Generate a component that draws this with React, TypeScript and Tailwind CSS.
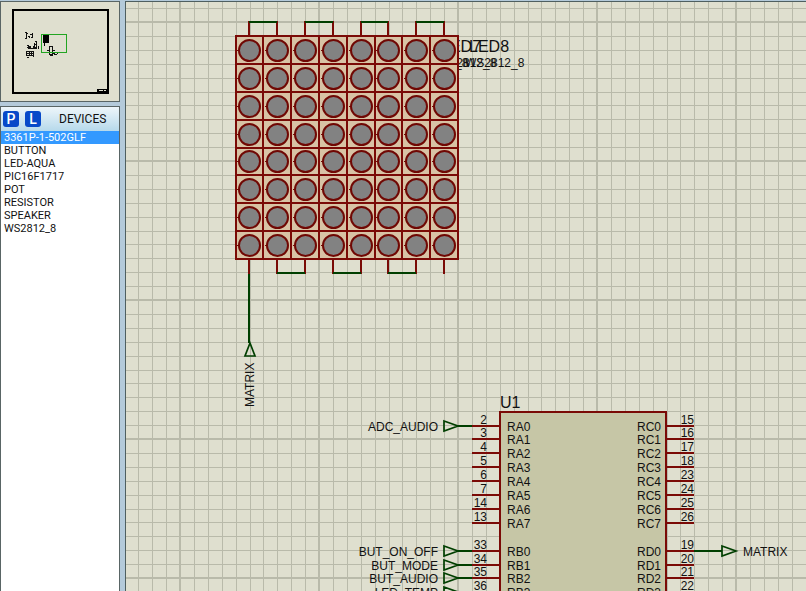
import React from "react";

const devices = [
  "3361P-1-502GLF",
  "BUTTON",
  "LED-AQUA",
  "PIC16F1717",
  "POT",
  "RESISTOR",
  "SPEAKER",
  "WS2812_8",
];

const WIRE = "#003f00";
const PIN = "#7a0a06";
const PITCH = 13.9;

const gridLines = Array.from({ length: 140 }, (_, i) => i - 4);
const colCentres = [249, 277, 305, 333, 361, 388, 416, 444];
const rowCentres = [50, 78, 106, 134, 161, 189, 217, 245];
const colEdges = [236, 263, 291, 319, 347, 375, 402, 430, 458];
const rowEdges = [36, 64, 92, 120, 148, 175, 203, 231, 259];

type Pin = { y: number; left: string; leftNum: string; right: string; rightNum: string; label?: string };

const pins: Pin[] = [
  { y: 426, left: "RA0", leftNum: "2", right: "RC0", rightNum: "15", label: "ADC_AUDIO" },
  { y: 439, left: "RA1", leftNum: "3", right: "RC1", rightNum: "16" },
  { y: 453, left: "RA2", leftNum: "4", right: "RC2", rightNum: "17" },
  { y: 467, left: "RA3", leftNum: "5", right: "RC3", rightNum: "18" },
  { y: 481, left: "RA4", leftNum: "6", right: "RC4", rightNum: "23" },
  { y: 495, left: "RA5", leftNum: "7", right: "RC5", rightNum: "24" },
  { y: 509, left: "RA6", leftNum: "14", right: "RC6", rightNum: "25" },
  { y: 523, left: "RA7", leftNum: "13", right: "RC7", rightNum: "26" },
  { y: 551, left: "RB0", leftNum: "33", right: "RD0", rightNum: "19", label: "BUT_ON_OFF" },
  { y: 565, left: "RB1", leftNum: "34", right: "RD1", rightNum: "20", label: "BUT_MODE" },
  { y: 578, left: "RB2", leftNum: "35", right: "RD2", rightNum: "21", label: "BUT_AUDIO" },
  { y: 592, left: "RB3", leftNum: "36", right: "RD3", rightNum: "22", label: "LED_TEMP" },
];

function Grid() {
  return (
    <g fill="#b9baaa" shapeRendering="crispEdges">
      {gridLines.map((i) => {
        const major = i % 10 === 0;
        const x = Math.round(180 + i * PITCH);
        const y = Math.round(22 + i * PITCH);
        return (
          <React.Fragment key={i}>
            <rect x={major ? x - 1 : x} y="0" width={major ? 2 : 1} height="1400" />
            <rect x="120" y={major ? y - 1 : y} width="1900" height={major ? 2 : 1} />
          </React.Fragment>
        );
      })}
    </g>
  );
}

function LedMatrix() {
  return (
    <g>
      <g fill="#111" fontSize="16">
        <text x="441" y="52">LED7</text>
        <text x="469" y="52">LED8</text>
      </g>
      <g fill="#111" fontSize="12">
        <text x="409" y="67">WS2812_8</text>
        <text x="437" y="67">WS2812_8</text>
        <text x="465" y="67">WS2812_8</text>
      </g>
      <rect x="236" y="36" width="222" height="223" fill="#d8c3a5" />
      <g stroke={PIN} strokeWidth="2" shapeRendering="crispEdges">
        {colEdges.map((x) => <path key={x} d={`M${x} 35V260`} />)}
        {rowEdges.map((y) => <path key={y} d={`M235 ${y}H459`} />)}
      </g>
      <g fill="#828282" stroke="#700804" strokeWidth="2">
        {rowCentres.map((y) => colCentres.map((x) => (
          <g key={`${x}-${y}`}>
            <path d={`M${x - 12} ${y + 0.5}h3`} strokeWidth="1" />
            <circle cx={x + 0.5} cy={y + 0.5} r="10.5" />
          </g>
        )))}
      </g>
      <g fill="none" strokeWidth="2" shapeRendering="crispEdges">
        {[0, 2, 4, 6].map((i) => (
          <g key={i}>
            <path stroke={PIN} d={`M${colCentres[i]} 36V21M${colCentres[i + 1]} 36V21`} />
            <path stroke={WIRE} d={`M${colCentres[i]} 22H${colCentres[i + 1]}`} />
          </g>
        ))}
        {[1, 3, 5].map((i) => (
          <g key={i}>
            <path stroke={PIN} d={`M${colCentres[i]} 259V274M${colCentres[i + 1]} 259V274`} />
            <path stroke={WIRE} d={`M${colCentres[i]} 273H${colCentres[i + 1]}`} />
          </g>
        ))}
        <path stroke={PIN} d="M249 259V274M444 259V274" />
        <path stroke={WIRE} d="M249 274V343" />
      </g>
      <path d="M250 343L255 356H245Z" fill="none" stroke={WIRE} strokeWidth="1.7" />
      <text transform="translate(254 407) rotate(-90)" fontSize="12" fill="#111">MATRIX</text>
    </g>
  );
}

function Chip() {
  return (
    <g fontSize="12" fill="#111">
      <text x="500" y="408" fontSize="16">U1</text>
      <rect x="500" y="412" width="166" height="560" fill="#c6c6a6" stroke={PIN} strokeWidth="2" shapeRendering="crispEdges" />
      {pins.map((p) => (
        <g key={p.y}>
          <path d={`M472 ${p.y}H500M666 ${p.y}H694`} stroke={PIN} strokeWidth="2" shapeRendering="crispEdges" />
          <text x="487" y={p.y - 2} textAnchor="end">{p.leftNum}</text>
          <text x="507" y={p.y + 5}>{p.left}</text>
          <text x="694" y={p.y - 2} textAnchor="end">{p.rightNum}</text>
          <text x="661" y={p.y + 5} textAnchor="end">{p.right}</text>
          {p.label && (
            <g>
              <text x="438" y={p.y + 5} textAnchor="end">{p.label}</text>
              <path d={`M444 ${p.y - 5}L458 ${p.y}L444 ${p.y + 5}Z`} fill="none" stroke={WIRE} strokeWidth="1.7" />
              <path d={`M458 ${p.y}H472`} stroke={WIRE} strokeWidth="2" shapeRendering="crispEdges" />
            </g>
          )}
        </g>
      ))}
      <path d="M694 551H722" stroke={WIRE} strokeWidth="2" shapeRendering="crispEdges" />
      <path d="M722 546L736 551L722 556Z" fill="none" stroke={WIRE} strokeWidth="1.7" />
      <text x="743" y="556">MATRIX</text>
    </g>
  );
}

function Overview() {
  return (
    <svg width="118" height="99" viewBox="1 2 118 99" shapeRendering="crispEdges" role="img" aria-label="Sheet overview">
      <rect x="13" y="10" width="95" height="83" fill="none" stroke="#000" strokeWidth="2" />
      <path d="M97 89h10v3h-10z" fill="#000" />
      <path d="M99 90h4v1h-4zM104 90h2v1h-2z" fill="#dfdfcf" />
      <path
        fill="none"
        stroke="#111"
        strokeWidth="1"
        d="M25 32.5h2M26 33.5h2M26.5 34v5M28 36.5h2M25 38.5h2M30 34.5h3M32.5 35v3M32 33.5h1M31 37.5h2M29.5 36v2M27 45.5h2M28 46.5h3M27 47.5h4M28 48.5h9M33 47.5h4M33 46.5h2M34.5 43v4M35 41.5h2M36.5 42v6M35 44.5h2M38.5 46v3M26 51.5h8M26 53.5h3M30 53.5h4M26 55.5h7M27 57.5h2M26.5 51v5M29.5 51v5M31.5 51v4M33.5 51v6"
      />
      <path d="M43 35h6v8h-6zM44 43h1v3h-1z" fill="#000" />
      <path d="M49.5 46v8h3v-8zM47 50.5h3M53 50.5h2M52 53.5h3M54 54.5h3M57 53.5h1M50 55.5h3" fill="none" stroke="#111" />
      <rect x="41.5" y="34.5" width="25" height="18" fill="none" stroke="#22a522" />
    </svg>
  );
}

const toolButton =
  "flex h-4 w-4 items-center justify-center rounded-[3px] bg-[#0749c9] text-sm font-medium leading-4 text-white";

function Sidebar() {
  return (
    <aside className="flex w-[120px] shrink-0 flex-col gap-1 pt-px font-[Roboto,sans-serif] text-[11px] text-[#111]">
      <div className="border border-[#596565] bg-[#dfdfcf]">
        <Overview />
      </div>
      <section className="flex min-h-0 flex-1 flex-col border-x border-t border-[#596565] bg-white">
        <header className="flex h-6 shrink-0 items-center gap-1.5 bg-linear-to-b from-[#eef6fa] to-[#b6d9eb] pl-0.5">
          <button type="button" aria-label="Pick devices" className={toolButton}>P</button>
          <button type="button" aria-label="Manage libraries" className={toolButton}>L</button>
          <h2 className="flex-1 pl-3 text-xs">DEVICES</h2>
        </header>
        <ul className="flex flex-col">
          {devices.map((name, i) => (
            <li key={name}>
              <button
                type="button"
                aria-pressed={i === 0}
                className="block w-full px-[3px] text-left leading-[13px] whitespace-nowrap aria-pressed:bg-[#3399ff] aria-pressed:text-white"
              >
                {name}
              </button>
            </li>
          ))}
        </ul>
      </section>
    </aside>
  );
}

export default function App() {
  return (
    <div className="flex h-screen gap-[5px] overflow-hidden bg-[#b4cada]">
      <Sidebar />
      <main className="mt-px min-w-0 flex-1 overflow-hidden border-t border-l border-[#4f5f60] bg-[#dfdfcf]">
        <svg
          width="1800"
          height="1200"
          viewBox="126 2 1800 1200"
          className="block max-w-none font-['Liberation_Sans',Arial,sans-serif]"
          role="img"
          aria-label="Schematic sheet"
        >
          <Grid />
          <LedMatrix />
          <Chip />
        </svg>
      </main>
    </div>
  );
}
